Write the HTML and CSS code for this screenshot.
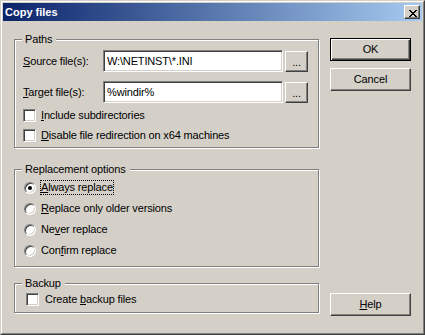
FILE: index.html
```html
<!DOCTYPE html>
<html lang="en">
<head>
    <meta charset="UTF-8">
    <title>Copy files</title>
    <link rel="stylesheet" href="styles.css">
</head>
<body>
    <div class="window">
        <div class="frame">
            <div class="titlebar">
                <span class="title">Copy files</span>
                <button class="close-btn" type="button">
                    <svg width="8" height="7" viewBox="0 0 8 7" shape-rendering="crispEdges">
                        <path fill="#000" d="M0 0h2v1H0zM6 0h2v1H6zM1 1h2v1H1zM5 1h2v1H5zM2 2h4v1H2zM3 3h2v1H3zM2 4h4v1H2zM1 5h2v1H1zM5 5h2v1H5zM0 6h2v1H0zM6 6h2v1H6z"/>
                    </svg>
                </button>
            </div>

            <div class="dialog">
                <div class="groups">
                    <fieldset class="group group-paths">
                        <legend>Paths</legend>
                        <div class="file-row">
                            <label class="file-label" for="source"><u>S</u>ource file(s):</label>
                            <input class="edit" id="source" type="text" value="W:\NETINST\*.INI">
                            <button class="btn btn-browse" type="button">...</button>
                        </div>
                        <div class="file-row file-row-next">
                            <label class="file-label" for="target"><u>T</u>arget file(s):</label>
                            <input class="edit" id="target" type="text" value="%windir%">
                            <button class="btn btn-browse" type="button">...</button>
                        </div>
                        <div class="check-row check-first">
                            <span class="checkbox"></span>
                            <span class="caption"><u>I</u>nclude subdirectories</span>
                        </div>
                        <div class="check-row check-second">
                            <span class="checkbox"></span>
                            <span class="caption"><u>D</u>isable file redirection on x64 machines</span>
                        </div>
                    </fieldset>

                    <fieldset class="group group-replace">
                        <legend>Replacement options</legend>
                        <div class="radio-row">
                            <span class="radio checked"></span>
                            <span class="caption focused"><u>A</u>lways replace</span>
                        </div>
                        <div class="radio-row">
                            <span class="radio"></span>
                            <span class="caption"><u>R</u>eplace only older versions</span>
                        </div>
                        <div class="radio-row">
                            <span class="radio"></span>
                            <span class="caption">Ne<u>v</u>er replace</span>
                        </div>
                        <div class="radio-row">
                            <span class="radio"></span>
                            <span class="caption">Con<u>f</u>irm replace</span>
                        </div>
                    </fieldset>

                    <fieldset class="group group-backup">
                        <legend>Backup</legend>
                        <div class="check-row check-backup">
                            <span class="checkbox"></span>
                            <span class="caption">Create <u>b</u>ackup files</span>
                        </div>
                    </fieldset>
                </div>

                <div class="buttons">
                    <button class="btn btn-default" type="button">OK</button>
                    <button class="btn btn-cancel" type="button">Cancel</button>
                    <button class="btn btn-help" type="button"><u>H</u>elp</button>
                </div>
            </div>
        </div>
    </div>
</body>
</html>
```

FILE: styles.css
```css
* {
    margin: 0;
    padding: 0;
    box-sizing: border-box;
}

body {
    font-family: "Liberation Sans", Arial, sans-serif;
    font-size: 11px;
    line-height: 13px;
    letter-spacing: -0.15px;
    color: #000;
    background: #d4d0c8;
}

u {
    text-decoration: underline;
}

/* window chrome */

.window {
    width: 425px;
    height: 335px;
    border: 1px solid;
    border-color: #d4d0c8 #404040 #404040 #d4d0c8;
    background: #d4d0c8;
}

.frame {
    height: 100%;
    display: flex;
    flex-direction: column;
    padding: 1px;
    border: 1px solid;
    border-color: #fff #808080 #808080 #fff;
}

.titlebar {
    height: 18px;
    display: flex;
    align-items: center;
    justify-content: space-between;
    padding: 0 2px;
    background: linear-gradient(to right, #0a246a, #a6caf0);
}

.title {
    color: #fff;
    font-weight: bold;
    letter-spacing: 0;
}

.close-btn {
    display: block;
    width: 16px;
    height: 14px;
    background: #d4d0c8;
    border: 1px solid;
    border-color: #fff #404040 #404040 #fff;
    box-shadow: inset -1px -1px #808080;
}

.close-btn svg {
    display: block;
    margin: 2px 0 0 4px;
}

/* dialog body */

.dialog {
    flex: 1;
    display: flex;
    padding: 12px 10px 0 11px;
}

.groups {
    width: 305px;
}

.group {
    border: 1px solid #808080;
    box-shadow: 1px 1px 0 #fff, inset 1px 1px 0 #fff;
    padding: 4px 0 5px 8px;
}

.group legend {
    margin-left: -1px;
    padding: 0 4px 0 3px;
    background: #d4d0c8;
    line-height: 13px;
}

.group-replace {
    margin-top: 15px;
    padding: 5px 0 9px 8px;
}

.group-backup {
    margin-top: 10px;
    padding: 3px 0 6px 8px;
}

.file-row {
    display: flex;
    align-items: center;
    height: 22px;
}

.file-row-next {
    margin-top: 9px;
}

.file-label {
    width: 80px;
}

.edit {
    width: 180px;
    height: 22px;
    padding: 0 3px;
    font: inherit;
    letter-spacing: inherit;
    color: #000;
    background: #fff;
    border: 1px solid;
    border-color: #808080 #fff #fff #808080;
    box-shadow: inset 1px 1px #404040, inset -1px -1px #d4d0c8;
    outline: none;
}

.btn {
    font: inherit;
    letter-spacing: inherit;
    color: #000;
    background: #d4d0c8;
    border: 1px solid;
    border-color: #fff #404040 #404040 #fff;
    box-shadow: inset -1px -1px #808080;
}

.btn-browse {
    width: 23px;
    height: 21px;
    margin-left: 2px;
    padding-top: 2px;
    line-height: 13px;
}

.check-row,
.radio-row {
    display: flex;
    align-items: center;
    height: 13px;
}

.check-first {
    margin-top: 6px;
}

.check-second {
    margin-top: 7px;
}

.radio-row + .radio-row {
    margin-top: 8px;
}

.checkbox {
    width: 13px;
    height: 13px;
    margin-right: 4px;
    background: #fff;
    border: 1px solid;
    border-color: #808080 #fff #fff #808080;
    box-shadow: inset 1px 1px #404040, inset -1px -1px #d4d0c8;
}

.check-backup .checkbox {
    margin-left: 3px;
    margin-right: 5px;
}

.radio {
    width: 12px;
    height: 12px;
    margin-left: 1px;
    margin-right: 4px;
    display: flex;
    align-items: center;
    justify-content: center;
    border-radius: 50%;
    background: #fff;
    border: 1px solid;
    border-color: #808080 #fff #fff #808080;
    box-shadow: inset 1px 1px #404040, inset -1px -1px #d4d0c8;
}

.radio.checked::after {
    content: "";
    width: 4px;
    height: 4px;
    border-radius: 50%;
    background: #000;
}

.caption {
    border: 1px solid transparent;
    white-space: nowrap;
}

.caption.focused {
    border: 1px dotted #000;
}

/* right hand buttons */

.buttons {
    width: 81px;
    margin-left: 11px;
    display: flex;
    flex-direction: column;
    padding: 5px 0 16px;
}

.buttons .btn {
    height: 23px;
}

.btn-default {
    border-color: #000;
    box-shadow: inset 1px 1px #fff, inset -1px -1px #404040, inset -2px -2px #808080;
}

.btn-cancel {
    margin-top: 7px;
}

.btn-help {
    margin-top: auto;
}
```
